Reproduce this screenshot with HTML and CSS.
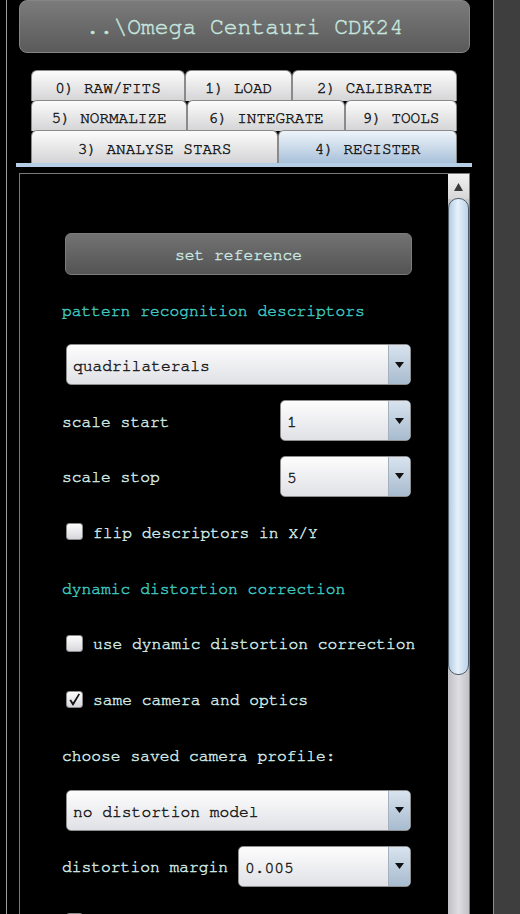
FILE: index.html
```html
<!DOCTYPE html>
<html lang="en">
<head>
  <meta charset="UTF-8">
  <title>Register</title>
  <link rel="stylesheet" href="styles.css">
</head>
<body>

<div class="app">
  <div class="main">
    <div class="title">..\Omega Centauri CDK24</div>

    <div class="tabs">
      <div class="tab-row row-a">
        <div class="tab">0) RAW/FITS</div>
        <div class="tab">1) LOAD</div>
        <div class="tab">2) CALIBRATE</div>
      </div>
      <div class="tab-row row-b">
        <div class="tab">5) NORMALIZE</div>
        <div class="tab">6) INTEGRATE</div>
        <div class="tab">9) TOOLS</div>
      </div>
      <div class="tab-row row-c">
        <div class="tab">3) ANALYSE STARS</div>
        <div class="tab active">4) REGISTER</div>
      </div>
    </div>
    <div class="tab-line"></div>

    <div class="panel">
      <div class="content">
        <div class="row"><div class="btn">set reference</div></div>

        <div class="row heading">pattern recognition descriptors</div>

        <div class="row">
          <div class="combo wide"><span>quadrilaterals</span><i class="arrow"><svg width="9" height="6" viewBox="0 0 9 6"><path d="M0 0H9L4.5 6Z" fill="#111"/></svg></i></div>
        </div>

        <div class="row">
          <span class="label">scale start</span>
          <div class="combo small"><span>1</span><i class="arrow"><svg width="9" height="6" viewBox="0 0 9 6"><path d="M0 0H9L4.5 6Z" fill="#111"/></svg></i></div>
        </div>

        <div class="row">
          <span class="label">scale stop</span>
          <div class="combo small"><span>5</span><i class="arrow"><svg width="9" height="6" viewBox="0 0 9 6"><path d="M0 0H9L4.5 6Z" fill="#111"/></svg></i></div>
        </div>

        <div class="row">
          <span class="check"></span>
          <span class="label">flip descriptors in X/Y</span>
        </div>

        <div class="row heading">dynamic distortion correction</div>

        <div class="row">
          <span class="check"></span>
          <span class="label">use dynamic distortion correction</span>
        </div>

        <div class="row">
          <span class="check"><svg width="15" height="15" viewBox="0 0 15 15"><path d="M2.5 8.2L4 7.4L6 10.5L11.6 1.6L13 2.3L6.4 13.4L5.6 13.4Z" fill="#111"/></svg></span>
          <span class="label">same camera and optics</span>
        </div>

        <div class="row label">choose saved camera profile:</div>

        <div class="row">
          <div class="combo wide"><span>no distortion model</span><i class="arrow"><svg width="9" height="6" viewBox="0 0 9 6"><path d="M0 0H9L4.5 6Z" fill="#111"/></svg></i></div>
        </div>

        <div class="row">
          <span class="label">distortion margin</span>
          <div class="combo medium"><span>0.005</span><i class="arrow"><svg width="9" height="6" viewBox="0 0 9 6"><path d="M0 0H9L4.5 6Z" fill="#111"/></svg></i></div>
        </div>

        <div class="row">
          <span class="check"></span>
        </div>
      </div>

      <div class="scrollbar">
        <div class="scroll-up"><svg width="9" height="8" viewBox="0 0 9 8"><path d="M4.5 0L9 8H0Z" fill="#3a3a3a"/></svg></div>
        <div class="thumb"></div>
      </div>
    </div>
  </div>
  <div class="side"></div>
</div>

</body>
</html>
```

FILE: styles.css
```css
body {
  margin: 0;
  background: #000;
  font-family: 'Nimbus Mono PS', 'Nimbus Mono L', 'FreeMono', 'Courier New', 'Liberation Mono', monospace;
  font-size: 16.3px;
  -webkit-text-stroke: 0.45px currentColor;
  overflow: hidden;
}
.app {
  display: flex;
  height: 914px;
}
.main {
  width: 451px;
  margin-left: 6px;
  border-left: 1px solid #9c9c9c;
  padding: 0 23px 0 12px;
}
.side {
  flex: 1;
  background: #3e3e3e;
  border-left: 1px solid #8e8e8e;
}

.title {
  height: 48px;
  padding-top: 3px;
  border: 1px solid #858585;
  border-radius: 8px;
  background: linear-gradient(#7b7b7b, #5a5a5a);
  color: #c6e6df;
  font-size: 23px;
  line-height: 48px;
  text-align: center;
}

.tabs {
  margin: 17px 13px 0 12px;
}
.tab-row {
  display: grid;
  height: 31px;
}
.row-a { grid-template-columns: 154px 107px 1fr; }
.row-b { grid-template-columns: 156px 158px 1fr; margin-top: -1px; }
.row-c { grid-template-columns: 247px 1fr; margin-top: -1px; height: 33px; }
.tab {
  display: flex;
  align-items: center;
  justify-content: center;
  padding-top: 3px;
  border: 1px solid #8a8a8a;
  border-bottom: none;
  border-radius: 6px 6px 0 0;
  background: linear-gradient(#fcfcfc, #d4d4d6);
  color: #1a1a1a;
  font-size: 16px;
}
.tab.active {
  background: linear-gradient(#eef4fa, #a9c1da);
}
.tab-line {
  height: 4px;
  margin: 0 -2px 0 -3px;
  background: #b6cde6;
}

.panel {
  display: flex;
  height: 760px;
  margin-top: 6px;
  border: 1px solid #7a7a7a;
  border-bottom: none;
}
.content {
  flex: 1;
  padding: 59px 0 0 42px;
}
.row {
  display: flex;
  align-items: center;
  width: 350px;
  height: 41px;
  margin-bottom: 14.7px;
  white-space: nowrap;
}
.heading {
  padding-top: 3px;
  height: 38px;
  color: #3fc8c0;
}
.label {
  flex-shrink: 0;
  padding-top: 2px;
  color: #d2e8e3;
}
.row.label {
  height: 39px;
}

.btn {
  flex: 1;
  height: 38px;
  padding-top: 2px;
  margin-left: 3px;
  border: 1px solid #7c7c7c;
  border-radius: 6px;
  background: linear-gradient(#727272, #545454);
  color: #c9e6e0;
  line-height: 38px;
  text-align: center;
}

.combo {
  display: flex;
  height: 39px;
  margin-right: 1px;
  border: 1px solid #8e8e8e;
  border-radius: 5px;
  background: linear-gradient(#fdfdfd, #e0e1e6);
  overflow: hidden;
}
.combo span {
  flex: 1;
  padding: 2px 0 0 6px;
  line-height: 39px;
  color: #1a1a1a;
}
.combo .arrow {
  display: flex;
  align-items: center;
  justify-content: center;
  width: 21px;
  border-left: 1px solid #a4b2c0;
  background: linear-gradient(#d8e3ee, #a8bbcf);
}
.combo.wide {
  flex: 1;
  margin-left: 4px;
}
.combo.small {
  width: 129px;
  margin-left: auto;
}
.combo.medium {
  width: 171px;
  margin-left: auto;
}

.check {
  display: flex;
  flex-shrink: 0;
  align-items: center;
  justify-content: center;
  width: 15px;
  height: 15px;
  margin: 0 10px 0 4px;
  border: 1px solid #8a8a8a;
  border-radius: 3px;
  background: linear-gradient(#fdfdfd, #d6d7dc);
}

.scrollbar {
  width: 21px;
  background: linear-gradient(90deg, #bfbfc4, #dedee2 50%, #c2c2c6);
}
.scroll-up {
  display: flex;
  align-items: center;
  justify-content: center;
  height: 25px;
  background: linear-gradient(#f2f2f2, #d6d6d8);
}
.thumb {
  height: 475px;
  margin-top: -1px;
  border: 1px solid #4e5c6a;
  border-radius: 10px;
  background: linear-gradient(90deg, #b3cbe2, #e6f1fb 45%, #bcd3e8);
}
```
